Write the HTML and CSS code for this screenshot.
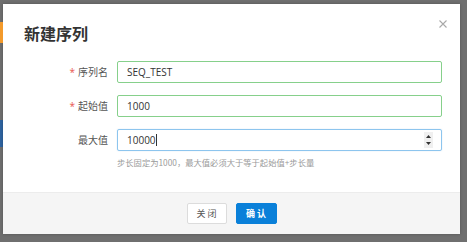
FILE: index.html
```html
<!DOCTYPE html>
<html lang="zh-CN">
<head>
    <meta charset="UTF-8">
    <title>新建序列</title>
    <link rel="stylesheet" href="styles.css">
</head>
<body>
    <div class="backdrop">
        <div class="side-mark"></div>
        <div class="dialog">
            <div class="dialog-header">
                <h1>新建序列</h1>
                <span class="close">
                    <svg width="8" height="8" viewBox="0 0 8 8"><path d="M0.5 0.5 L7.5 7.5 M7.5 0.5 L0.5 7.5" stroke="#a9a9a9" stroke-width="1.1" fill="none"/></svg>
                </span>
            </div>

            <div class="dialog-body">
                <div class="row">
                    <label class="label"><span class="req">*</span>序列名</label>
                    <div class="input valid">SEQ_TEST</div>
                </div>
                <div class="row">
                    <label class="label"><span class="req">*</span>起始值</label>
                    <div class="input valid">1000</div>
                </div>
                <div class="row last">
                    <label class="label">最大值</label>
                    <div class="field">
                        <div class="input focus">10000<span class="caret"></span>
                            <span class="spin">
                                <svg width="5" height="3" viewBox="0 0 5 3"><path d="M2.5 0 L5 3 L0 3 Z" fill="#333"/></svg>
                                <svg width="5" height="3" viewBox="0 0 5 3"><path d="M0 0 L5 0 L2.5 3 Z" fill="#333"/></svg>
                            </span>
                        </div>
                        <p class="hint">步长固定为1000，最大值必须大于等于起始值+步长量</p>
                    </div>
                </div>
            </div>

            <div class="dialog-footer">
                <button class="btn">关 闭</button>
                <button class="btn primary">确 认</button>
            </div>
        </div>
    </div>
</body>
</html>
```

FILE: styles.css
```css
html, body {
    margin: 0;
    padding: 0;
}
body {
    font-family: "Open Sans", "Noto Sans CJK SC", sans-serif;
    background: #6f6f6f;
    width: 467px;
    height: 242px;
    overflow: hidden;
}
.backdrop {
    position: relative;
    padding: 4px 0 0 3px;
}
.side-mark {
    position: absolute;
    left: 0;
    top: 120px;
    width: 3px;
    height: 27px;
    background: #2f64a0;
}
.dialog {
    position: relative;
    width: 457px;
    height: 230px;
    background: #fff;
    display: flex;
    flex-direction: column;
    box-shadow: 0 0 3px rgba(0, 0, 0, 0.25);
}
.dialog-header {
    position: relative;
    height: 57px;
}
.dialog-header::before {
    content: "";
    position: absolute;
    left: -3px;
    top: 18px;
    width: 3px;
    height: 21px;
    background: #f39a2b;
}
h1 {
    margin: 0;
    padding: 17px 0 0 21px;
    font-size: 16px;
    line-height: 24px;
    font-weight: 700;
    color: #333;
    font-family: "Noto Sans CJK SC", sans-serif;
}
.close {
    position: absolute;
    right: 13px;
    top: 16px;
    line-height: 0;
}
.dialog-body {
    flex: 1;
}
.row {
    display: flex;
    align-items: flex-start;
    margin-bottom: 12px;
}
.row.last {
    margin-bottom: 0;
}
.label {
    width: 114px;
    padding-right: 9px;
    box-sizing: border-box;
    text-align: right;
    font-size: 10px;
    line-height: 22px;
    color: #555;
}
.req {
    color: #e8554e;
    margin-right: 3px;
}
.field {
    width: 325px;
}
.input {
    position: relative;
    box-sizing: border-box;
    width: 325px;
    height: 22px;
    border: 1px solid #ccc;
    border-radius: 2px;
    padding: 0 9px;
    font-size: 10px;
    line-height: 20px;
    color: #333;
}
.input.valid {
    border-color: #86d08b;
}
.input.focus {
    border-color: #8dc5ee;
    box-shadow: 0 0 1px rgba(100, 170, 230, 0.5);
}
.caret {
    display: inline-block;
    width: 1px;
    height: 12px;
    background: #333;
    vertical-align: middle;
    margin-top: -2px;
}
.spin {
    position: absolute;
    right: 8px;
    top: 2px;
    width: 9px;
    height: 16px;
    background: #f0f0f0;
    display: flex;
    flex-direction: column;
    align-items: center;
    justify-content: center;
    gap: 4px;
    line-height: 0;
}
.hint {
    margin: 5px 0 0;
    font-size: 8.3px;
    line-height: 12px;
    color: #9a9a9a;
    font-family: "Noto Sans CJK SC", sans-serif;
}
.dialog-footer {
    height: 42px;
    background: #f5f5f5;
    border-top: 1px solid #ececec;
    box-sizing: border-box;
    display: flex;
    justify-content: center;
    align-items: flex-start;
    padding-top: 10px;
    gap: 9px;
}
.btn {
    width: 40px;
    height: 21px;
    padding: 0;
    border: 1px solid #dcdcdc;
    border-radius: 2px;
    background: #fff;
    color: #555;
    font-size: 9px;
    font-family: "Noto Sans CJK SC", sans-serif;
    cursor: pointer;
}
.btn.primary {
    width: 41px;
    background: #0a80d9;
    border-color: #0a80d9;
    color: #fff;
    font-weight: 700;
}
```
